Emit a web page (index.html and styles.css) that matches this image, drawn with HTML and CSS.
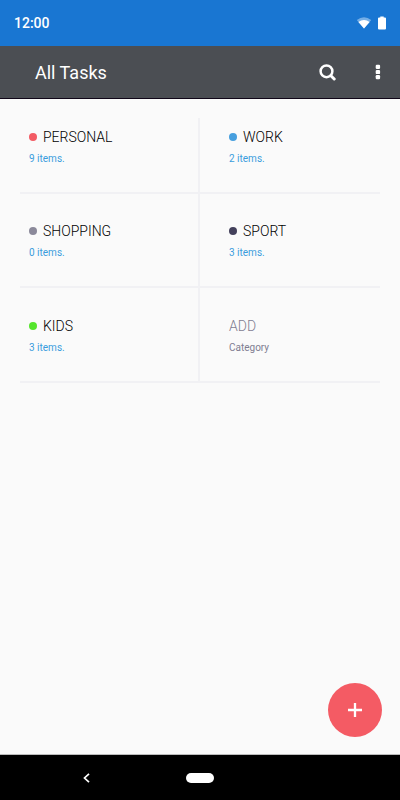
FILE: index.html
```html
<!DOCTYPE html>
<html lang="en">
<head>
<meta charset="utf-8">
<meta name="viewport" content="width=device-width, initial-scale=1">
<title>All Tasks</title>
<link rel="stylesheet" href="styles.css">
</head>
<body>
<div class="status">
  <span class="clock">12:00</span>
  <svg class="wifi" width="16" height="12" viewBox="0 0 16 12" aria-hidden="true"><path d="M0.8 3.1Q8-2.4 15.200 3.100L8 11.500z" fill="#75aee6"/><path d="M2.400 4.900Q8 .9 13.600 4.900L8 11.500z" fill="#fff"/></svg>
  <svg width="8" height="14" viewBox="0 0 8 14" aria-hidden="true"><path d="M2.3.5h3.4v1H7q1 0 1 1V12.500q0 1-1 1H1q-1 0-1-1V2.500q0-1 1-1h1.300z" fill="#fff"/></svg>
</div>
<header class="bar">
  <h1>All Tasks</h1>
  <button class="icon search" aria-label="Search"><svg width="18" height="18" viewBox="0 0 18 18"><circle cx="7.500" cy="8.300" r="5.900" fill="none" stroke="#fff" stroke-width="2.500"/><path d="M11.900 12.700l3.300 3.300" stroke="#fff" stroke-width="3" stroke-linecap="round"/></svg></button>
  <button class="icon more" aria-label="More options"><svg width="6" height="16" viewBox="0 0 6 16"><g fill="#fff"><rect x=".7" y=".8" width="4.400" height="4.200" rx="1.200"/><rect x=".7" y="5.900" width="4.400" height="4.200" rx="1.200"/><rect x=".7" y="11" width="4.400" height="4.200" rx="1.200"/></g></svg></button>
</header>
<main>
  <div class="grid">
    <a class="cell" href="#personal"><span class="name"><i class="dot red"></i>PERSONAL</span><span class="count">9 items.</span></a>
    <a class="cell" href="#work"><span class="name"><i class="dot blue"></i>WORK</span><span class="count">2 items.</span></a>
    <a class="cell" href="#shopping"><span class="name"><i class="dot gray"></i>SHOPPING</span><span class="count">0 items.</span></a>
    <a class="cell" href="#sport"><span class="name"><i class="dot navy"></i>SPORT</span><span class="count">3 items.</span></a>
    <a class="cell" href="#kids"><span class="name"><i class="dot green"></i>KIDS</span><span class="count">3 items.</span></a>
    <a class="cell add" href="#add"><span class="name">ADD</span><span class="count">Category</span></a>
  </div>
  <button class="fab" aria-label="Add task"><svg width="14" height="14" viewBox="0 0 14 14"><path d="M7 0v14M0 7h14" stroke="#fff" stroke-width="2.300"/></svg></button>
</main>
<nav class="nav">
  <button class="icon" aria-label="Back"><svg width="8" height="10" viewBox="0 0 8 10"><path d="M6 .8L1.500 5L6 9.200" fill="none" stroke="#fff" stroke-width="1.700"/></svg></button>
  <button class="home" aria-label="Home"></button>
</nav>
</body>
</html>
```
FILE: styles.css
```css
* { box-sizing: border-box; }
body {
  margin: 0;
  min-height: 100vh;
  display: flex;
  flex-direction: column;
  background: #fafafa;
  font-family: Roboto, "Liberation Sans", sans-serif;
}
button { border: 0; padding: 0; background: none; cursor: pointer; }
svg { display: block; }
.status {
  height: 46px;
  display: flex;
  align-items: center;
  padding: 0 14px;
  background: #1976d2;
  color: #fff;
}
.clock { flex: 1; font-size: 14px; font-weight: 500; }
.wifi { margin-right: 6px; }
.bar {
  height: 53px;
  display: flex;
  align-items: center;
  padding: 0 19px 0 35px;
  background: #4b4e53;
  border-bottom: 1px solid #100618;
  color: #fff;
}
.bar h1 { flex: 1; margin: 0; font-size: 18px; font-weight: 400; }
.search { margin-right: 38px; }
main { flex: 1; display: flex; flex-direction: column; padding: 19px 18px 17px 20px; }
.grid {
  display: grid;
  grid-template-columns: 1fr 1fr;
  grid-template-rows: 76px 94px 95px;
  margin-right: 2px;
}
.cell {
  display: flex;
  flex-direction: column;
  justify-content: flex-end;
  gap: 7px;
  padding: 0 10px 26px 29px;
  border-bottom: 2px solid #f1f1f4;
  color: #000;
  text-decoration: none;
}
.cell:nth-child(odd) { padding-left: 9px; border-right: 2px solid #f1f1f4; }
.name { display: flex; align-items: center; font-size: 14px; line-height: 16px; font-weight: 300; }
.count { font-size: 10px; line-height: 14px; color: #3b9ddd; }
.add .name, .add .count { color: #7f7d91; }
.dot { width: 8px; height: 8px; margin-right: 6px; border-radius: 50%; }
.red { background: #f35b64; }
.blue { background: #479fde; }
.gray { background: #8b899a; }
.navy { background: #43405b; }
.green { background: #55e52c; }
.fab {
  width: 54px;
  height: 54px;
  display: flex;
  align-items: center;
  justify-content: center;
  margin-top: auto;
  align-self: flex-end;
  border-radius: 50%;
  background: #f45b64;
}
.nav {
  height: 46px;
  display: flex;
  align-items: center;
  gap: 95px;
  padding-left: 83px;
  background: #000;
  border-top: 1px solid #bbb;
}
.home { width: 28px; height: 10px; border-radius: 5px; background: #fff; }
```
